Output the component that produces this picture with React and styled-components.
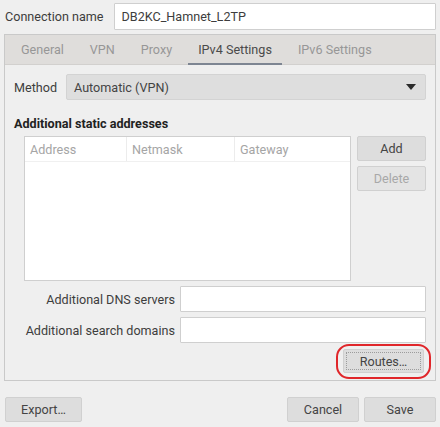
import React from "react";
import styled, { createGlobalStyle } from "styled-components";

const GlobalStyle = createGlobalStyle`
  html, body {
    margin: 0;
    padding: 0;
    background: #efefef;
  }
  body {
    font-family: Roboto, "Liberation Sans", sans-serif;
    font-size: 12.6px;
    color: #3d3d3d;
  }
`;

const Window = styled.div`
  width: 440px;
  height: 427px;
  box-sizing: border-box;
  padding: 3px 4px 0 4px;
  display: flex;
  flex-direction: column;
`;

const NameRow = styled.div`
  display: flex;
  align-items: center;
  gap: 10px;
  padding-left: 1px;
  height: 27px;
`;

const Label = styled.span`
  color: #3d3d3d;
  white-space: nowrap;
  text-align: ${(p) => (p.$right ? "right" : "left")};
  width: ${(p) => p.$width || "auto"};
`;

const Entry = styled.div`
  flex: 1;
  height: ${(p) => p.$h || 26}px;
  box-sizing: border-box;
  background: #fff;
  border: 1px solid #cfcfcf;
  border-radius: 1px;
  display: flex;
  align-items: center;
  padding-left: 7px;
  color: #3d3d3d;
`;

const Notebook = styled.div`
  margin-top: 4px;
  height: 347px;
  box-sizing: border-box;
  border: 1px solid #c9c9c9;
  display: flex;
  flex-direction: column;
`;

const TabBar = styled.div`
  height: 29px;
  background: #dfdddb;
  border-bottom: 1px solid #d2d0ce;
  display: flex;
  align-items: stretch;
  gap: 6px;
  padding-left: 6px;
`;

const Tab = styled.div`
  padding: 0 10px;
  display: flex;
  align-items: center;
  color: ${(p) => (p.$active ? "#4a4a4a" : "#979797")};
  border-bottom: 2px solid ${(p) => (p.$active ? "#7d8592" : "transparent")};
  margin-bottom: -1px;
  padding-top: 1px;
`;

const Page = styled.div`
  flex: 1;
  padding: 9px 9px 0 9px;
  display: flex;
  flex-direction: column;
`;

const MethodRow = styled.div`
  display: flex;
  align-items: center;
  gap: 9px;
`;

const Combo = styled.div`
  flex: 1;
  height: 26px;
  box-sizing: border-box;
  background: #dedede;
  border: 1px solid #d3d3d3;
  border-radius: 2px;
  display: flex;
  align-items: center;
  justify-content: space-between;
  padding: 0 9px 0 7px;
  color: #444;
`;

const SectionTitle = styled.div`
  font-weight: 700;
  color: #222;
  margin-top: 16px;
`;

const AddressBlock = styled.div`
  display: flex;
  gap: 6px;
  margin-top: 5px;
  padding-left: 10px;
`;

const Table = styled.div`
  flex: 1;
  height: 145px;
  box-sizing: border-box;
  background: #fff;
  border: 1px solid #cfcfcf;
`;

const HeaderRow = styled.div`
  display: grid;
  grid-template-columns: 102px 108px 1fr;
  height: 24px;
  border-bottom: 1px solid #f0f0f0;
`;

const HeaderCell = styled.div`
  display: flex;
  align-items: center;
  padding-left: 5px;
  color: #a5a5a5;
  border-right: ${(p) => (p.$last ? "none" : "1px solid #ececec")};
`;

const SideButtons = styled.div`
  display: flex;
  flex-direction: column;
  gap: 5px;
`;

const Button = styled.div`
  width: ${(p) => p.$w}px;
  height: ${(p) => p.$h || 25}px;
  box-sizing: border-box;
  border: 1px solid #d0d0d0;
  border-radius: 2px;
  display: flex;
  align-items: center;
  justify-content: center;
  color: ${(p) => (p.$disabled ? "#a8a8a8" : "#444")};
  background: ${(p) => (p.$disabled ? "#e4e4e4" : "#dddddd")};
  position: relative;
`;

const FocusRing = styled.span`
  position: absolute;
  inset: 2px;
  border: 1px dotted #9c9c9c;
  pointer-events: none;
`;

const FormRow = styled.div`
  display: flex;
  align-items: center;
  gap: 5px;
  margin-top: ${(p) => p.$top}px;
`;

const RoutesRow = styled.div`
  display: flex;
  justify-content: flex-end;
  margin-top: 1px;
  margin-right: -5px;
`;

const Highlight = styled.div`
  border: 2px solid #e0262a;
  border-radius: 13px;
  padding: 3px 5px 4px 5px;
`;

const Footer = styled.div`
  display: flex;
  align-items: center;
  margin-top: 16px;
  padding-left: 1px;
  gap: 5px;
`;

const Spacer = styled.div`
  flex: 1;
`;

const Arrow = () => (
  <svg width="10" height="6" viewBox="0 0 10 6">
    <path d="M0 0 H10 L5 6 Z" fill="#2b2b2b" />
  </svg>
);

export default function App() {
  const tabs = ["General", "VPN", "Proxy", "IPv4 Settings", "IPv6 Settings"];
  return (
    <>
      <GlobalStyle />
      <Window>
        <NameRow>
          <Label>Connection name</Label>
          <Entry $h={27}>DB2KC_Hamnet_L2TP</Entry>
        </NameRow>
        <Notebook>
          <TabBar>
            {tabs.map((t) => (
              <Tab key={t} $active={t === "IPv4 Settings"}>
                {t}
              </Tab>
            ))}
          </TabBar>
          <Page>
            <MethodRow>
              <Label>Method</Label>
              <Combo>
                <span>Automatic (VPN)</span>
                <Arrow />
              </Combo>
            </MethodRow>
            <SectionTitle>Additional static addresses</SectionTitle>
            <AddressBlock>
              <Table>
                <HeaderRow>
                  <HeaderCell>Address</HeaderCell>
                  <HeaderCell>Netmask</HeaderCell>
                  <HeaderCell $last>Gateway</HeaderCell>
                </HeaderRow>
              </Table>
              <SideButtons>
                <Button $w={69}>Add</Button>
                <Button $w={69} $disabled>
                  Delete
                </Button>
              </SideButtons>
            </AddressBlock>
            <FormRow $top={5}>
              <Label $right $width="161px">
                Additional DNS servers
              </Label>
              <Entry />
            </FormRow>
            <FormRow $top={5}>
              <Label $right $width="161px">
                Additional search domains
              </Label>
              <Entry />
            </FormRow>
            <RoutesRow>
              <Highlight>
                <Button $w={81} $h={24}>
                  <FocusRing />
                  Routes…
                </Button>
              </Highlight>
            </RoutesRow>
          </Page>
        </Notebook>
        <Footer>
          <Button $w={77}>Export…</Button>
          <Spacer />
          <Button $w={72}>Cancel</Button>
          <Button $w={72}>Save</Button>
        </Footer>
      </Window>
    </>
  );
}
